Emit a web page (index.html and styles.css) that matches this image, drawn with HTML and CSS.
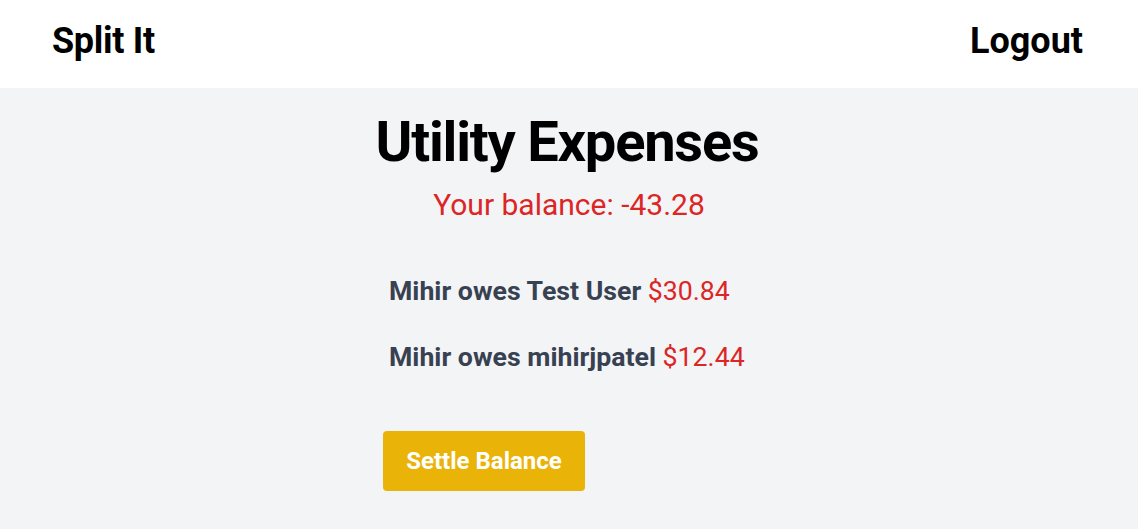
FILE: index.html
```html
<!DOCTYPE html>
<html>
<head>
<meta charset="utf-8">
<link rel="stylesheet" href="styles.css">
</head>
<body>
<header class="nav">
  <div class="brand">Split It</div>
  <div class="logout">Logout</div>
</header>
<main class="main">
  <h1 class="title">Utility Expenses</h1>
  <p class="balance">Your balance: -43.28</p>
  <div class="panel">
    <div class="debts">
      <p class="debt"><span class="who">Mihir owes Test User</span> <span class="amt">$30.84</span></p>
      <p class="debt"><span class="who">Mihir owes mihirjpatel</span> <span class="amt">$12.44</span></p>
    </div>
    <button class="settle">Settle Balance</button>
  </div>
</main>
</body>
</html>
```
FILE: styles.css
```css
* { box-sizing: border-box; }
html, body { margin: 0; padding: 0; }
body {
  font-family: Roboto, "Liberation Sans", sans-serif;
  background: #f3f4f6;
  min-height: 529px;
}
.nav {
  background: #ffffff;
  height: 88px;
  display: flex;
  justify-content: space-between;
  align-items: center;
  padding: 0 55px 6px 52px;
}
.brand, .logout {
  font-size: 36px;
  font-weight: 700;
  color: #000;
}
.brand { letter-spacing: -0.3px; }
.main {
  display: flex;
  flex-direction: column;
  align-items: center;
}
.title {
  margin: 26px 4px 0 0;
  font-size: 56px;
  font-weight: 700;
  line-height: 1;
  letter-spacing: -1.2px;
  color: #000;
}
.balance {
  margin: 17px 0 0;
  font-size: 30px;
  line-height: 36px;
  color: #dc2626;
}
.panel {
  width: 372px;
  display: flex;
  flex-direction: column;
  align-items: flex-start;
}
.debts {
  padding: 50px 6px 0;
  display: flex;
  flex-direction: column;
  gap: 30px;
}
.debt {
  margin: 0;
  font-size: 26.7px;
  line-height: 36px;
}
.who { font-weight: 700; color: #374151; }
.amt { color: #dc2626; }
.settle {
  margin-top: 56px;
  width: 202px;
  height: 60px;
  border: none;
  border-radius: 4px;
  background: #eab308;
  color: #fff;
  font-family: Roboto, "Liberation Sans", sans-serif;
  font-size: 24px;
  font-weight: 700;
  padding: 0;
}
```
